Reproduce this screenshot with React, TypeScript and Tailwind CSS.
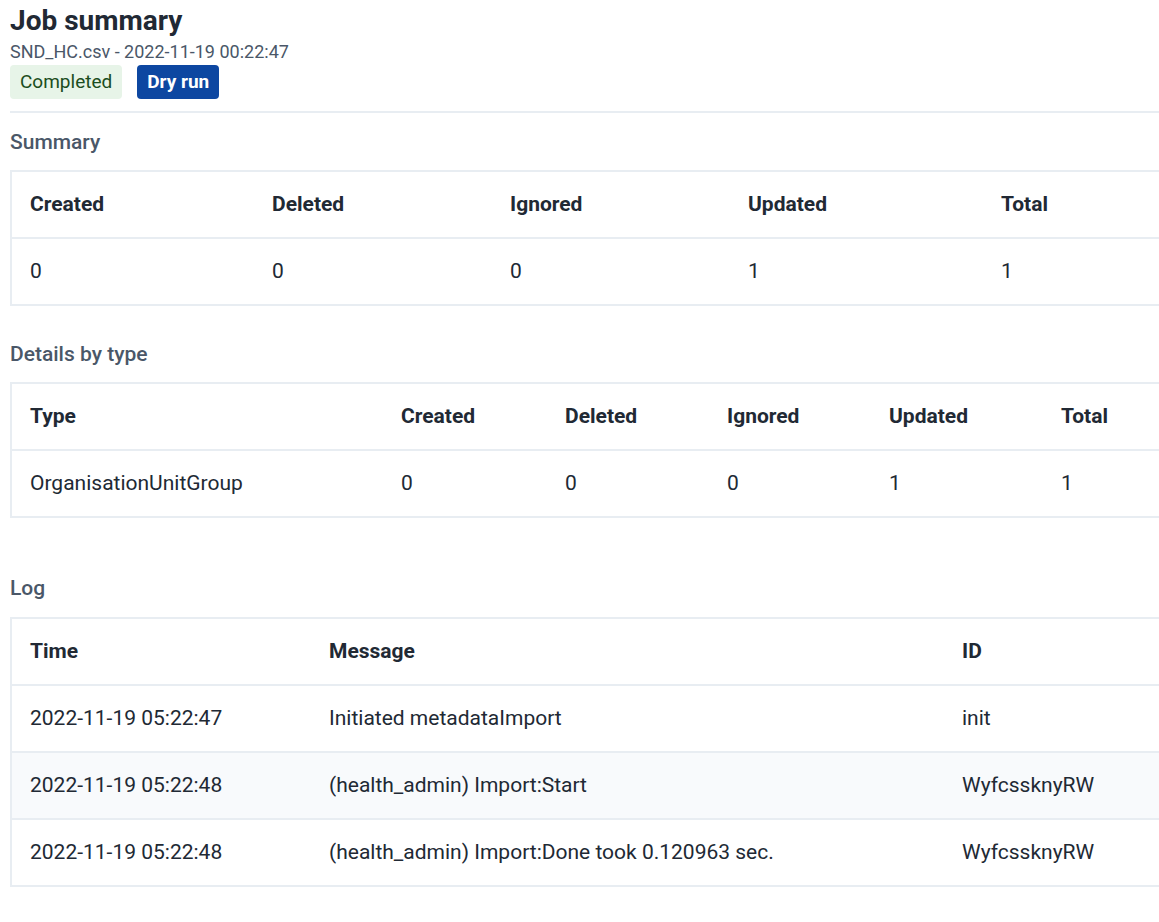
import React from 'react';

interface Column {
    label: string;
    width: number;
}

interface DataTableProps {
    columns: Column[];
    rows: string[][];
    striped?: boolean;
}

const DataTable: React.FC<DataTableProps> = ({ columns, rows, striped }) => {
    return (
        <table className="table-fixed border-collapse w-[1240px] border-2 border-[#e8edf2] text-[21px] text-[#212934]">
            <colgroup>
                {columns.map((c) => (
                    <col key={c.label} style={{ width: c.width }} />
                ))}
            </colgroup>
            <thead>
                <tr className="h-[67px] border-b-2 border-[#e8edf2]">
                    {columns.map((c) => (
                        <th key={c.label} className="text-left font-bold pl-[18px] align-middle">
                            {c.label}
                        </th>
                    ))}
                </tr>
            </thead>
            <tbody>
                {rows.map((row, i) => (
                    <tr
                        key={i}
                        className={
                            'h-[67px] border-b-2 border-[#e8edf2] ' +
                            (striped && i % 2 === 1 ? 'bg-[#f8fafc]' : 'bg-white')
                        }
                    >
                        {row.map((cell, j) => (
                            <td key={j} className="pl-[18px] align-middle whitespace-nowrap">
                                {cell}
                            </td>
                        ))}
                    </tr>
                ))}
            </tbody>
        </table>
    );
};

const summaryCols: Column[] = [
    { label: 'Created', width: 243 },
    { label: 'Deleted', width: 238 },
    { label: 'Ignored', width: 238 },
    { label: 'Updated', width: 253 },
    { label: 'Total', width: 268 },
];

const detailCols: Column[] = [
    { label: 'Type', width: 372 },
    { label: 'Created', width: 164 },
    { label: 'Deleted', width: 162 },
    { label: 'Ignored', width: 162 },
    { label: 'Updated', width: 172 },
    { label: 'Total', width: 208 },
];

const logCols: Column[] = [
    { label: 'Time', width: 300 },
    { label: 'Message', width: 633 },
    { label: 'ID', width: 307 },
];

const logRows = [
    ['2022-11-19 05:22:47', 'Initiated metadataImport', 'init'],
    ['2022-11-19 05:22:48', '(health_admin) Import:Start', 'WyfcssknyRW'],
    ['2022-11-19 05:22:48', '(health_admin) Import:Done took 0.120963 sec.', 'WyfcssknyRW'],
];

export default function App() {
    return (
        <div className="w-full overflow-hidden bg-white" style={{ fontFamily: 'Roboto, "Liberation Sans", sans-serif' }}>
            <div className="pl-[10px] w-[1260px] pb-[36px]">
                <h1 className="text-[28px] leading-[32px] font-bold text-[#212934] pt-[5px]">Job summary</h1>
                <p className="text-[18px] leading-[22px] text-[#4a5768] mt-[4px]">SND_HC.csv - 2022-11-19 00:22:47</p>
                <div className="flex gap-[15px] mt-[2px]">
                    <span className="h-[34px] px-[10px] flex items-center rounded-[4px] bg-[#e7f4e8] text-[#1b4d20] text-[19px]">
                        Completed
                    </span>
                    <span className="h-[34px] px-[10px] flex items-center rounded-[4px] bg-[#0d47a1] text-white text-[19px] font-bold">
                        Dry run
                    </span>
                </div>
                <div className="mt-[12px] border-t-2 border-[#e8edf2]" />

                <h2 className="text-[21px] leading-[24px] font-medium text-[#4a5768] mt-[17px]">Summary</h2>
                <div className="mt-[16px]">
                    <DataTable columns={summaryCols} rows={[['0', '0', '0', '1', '1']]} />
                </div>

                <h2 className="text-[21px] leading-[24px] font-medium text-[#4a5768] mt-[36px]">Details by type</h2>
                <div className="mt-[16px]">
                    <DataTable
                        columns={detailCols}
                        rows={[['OrganisationUnitGroup', '0', '0', '0', '1', '1']]}
                    />
                </div>

                <h2 className="text-[21px] leading-[24px] font-medium text-[#4a5768] mt-[58px]">Log</h2>
                <div className="mt-[17px]">
                    <DataTable columns={logCols} rows={logRows} striped />
                </div>
            </div>
        </div>
    );
}
